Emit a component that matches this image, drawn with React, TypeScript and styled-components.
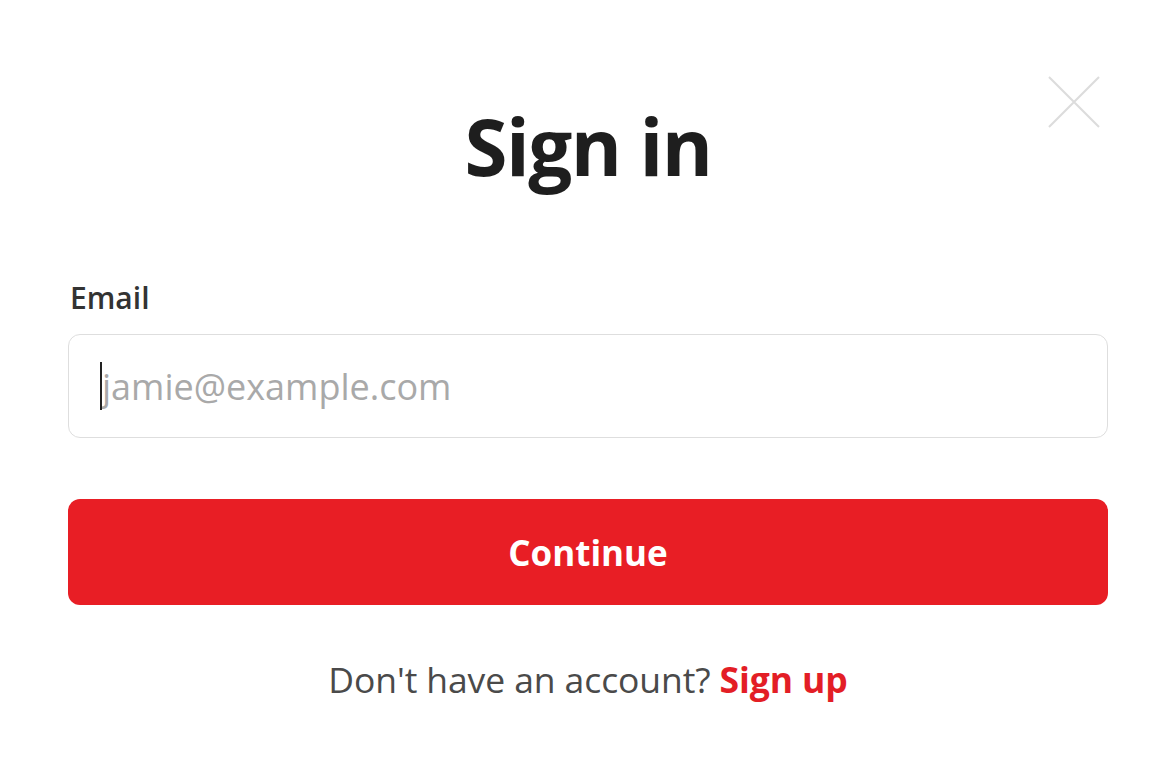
import React from "react";
import styled, { createGlobalStyle } from "styled-components";

const Global = createGlobalStyle`
  html, body { margin: 0; padding: 0; background: #fff; }
  body { font-family: "Segoe UI", "Open Sans", "Noto Sans", sans-serif; }
  * { box-sizing: border-box; }
`;

const Page = styled.div`
  position: relative;
  width: 1176px;
  height: 767px;
  padding: 0 68px;
  display: flex;
  flex-direction: column;
`;

const Title = styled.h1`
  margin: 91px 0 0;
  text-align: center;
  font-size: 78px;
  line-height: 110px;
  font-weight: 700;
  color: #1e1e1e;
  letter-spacing: -1.5px;
`;

const CloseButton = styled.button`
  position: absolute;
  top: 76px;
  right: 76px;
  width: 52px;
  height: 52px;
  padding: 0;
  border: none;
  background: transparent;
  display: flex;
  align-items: center;
  justify-content: center;
`;

const Form = styled.form`
  margin-top: 77px;
  display: flex;
  flex-direction: column;
`;

const Label = styled.label`
  font-size: 30px;
  line-height: 40px;
  font-weight: 600;
  color: #333;
  margin-left: 2px;
`;

const Field = styled.div`
  position: relative;
  margin-top: 16px;
`;

const Input = styled.input`
  display: block;
  height: 104px;
  width: 100%;
  border: 1.5px solid #dedede;
  border-radius: 12px;
  padding: 0 33px;
  font-family: inherit;
  font-size: 36px;
  color: #222;
  outline: none;
  caret-color: #222;
  &::placeholder { color: #a9a9a9; }
`;

const Caret = styled.span`
  position: absolute;
  left: 32px;
  top: 28px;
  width: 1.5px;
  height: 48px;
  background: #222;
  pointer-events: none;
`;

const Submit = styled.button`
  margin-top: 61px;
  height: 106px;
  width: 100%;
  border: none;
  border-radius: 12px;
  background: #e81e25;
  color: #fff;
  font-family: inherit;
  font-size: 35px;
  font-weight: 700;
`;

const Footer = styled.p`
  margin: 49px 0 0;
  text-align: center;
  font-size: 35.5px;
  line-height: 50px;
  color: #4a4a4a;
  letter-spacing: -0.1px;
`;

const SignUp = styled.a`
  color: #e31e26;
  font-weight: 700;
  text-decoration: none;
`;

export default function App() {
  return (
    <>
      <Global />
      <Page>
        <CloseButton aria-label="Close">
          <svg width="52" height="52" viewBox="0 0 52 52">
            <path d="M1 1 L51 51 M51 1 L1 51" stroke="#dcdcdc" strokeWidth="2" />
          </svg>
        </CloseButton>
        <Title>Sign in</Title>
        <Form onSubmit={(e) => e.preventDefault()}>
          <Label htmlFor="email">Email</Label>
          <Field>
            <Input id="email" type="email" placeholder="jamie@example.com" />
            <Caret />
          </Field>
          <Submit type="submit">Continue</Submit>
        </Form>
        <Footer>
          Don't have an account? <SignUp href="#">Sign up</SignUp>
        </Footer>
      </Page>
    </>
  );
}
